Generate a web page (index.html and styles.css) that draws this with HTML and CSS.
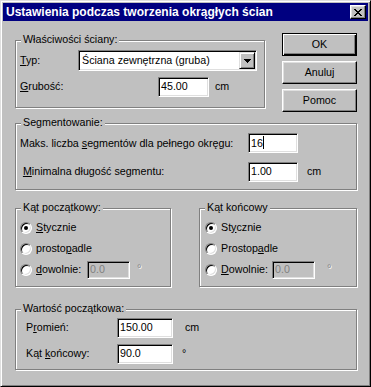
FILE: index.html
```html
<!DOCTYPE html>
<html lang="pl">
<head>
<meta charset="utf-8">
<title>Ustawienia podczas tworzenia okrągłych ścian</title>
<link rel="stylesheet" href="styles.css">
</head>
<body>
<div class="window">
  <div class="titlebar">
    <span class="title">Ustawienia podczas tworzenia okrągłych ścian</span>
    <span class="close"><svg width="8" height="7" viewBox="0 0 8 7" shape-rendering="crispEdges"><path d="M0 0h2v1H0zM6 0h2v1H6zM1 1h2v1H1zM5 1h2v1H5zM2 2h4v1H2zM3 3h2v1H3zM2 4h4v1H2zM1 5h2v1H1zM5 5h2v1H5zM0 6h2v1H0zM6 6h2v1H6z" fill="#000"/></svg></span>
  </div>
  <div class="body">
    <div class="top-row">
      <div class="group g-props">
        <span class="legend">Właściwości ściany:</span>
        <div class="row">
          <span class="lbl w-typ"><u>T</u>yp:</span>
          <div class="combo">
            <span class="combo-text">Ściana zewnętrzna (gruba)</span>
            <span class="drop"><svg width="7" height="4" viewBox="0 0 7 4" shape-rendering="crispEdges"><path d="M0 0h7v1H0zM1 1h5v1H1zM2 2h3v1H2zM3 3h1v1H3z" fill="#000"/></svg></span>
          </div>
        </div>
        <div class="row r-grub">
          <span class="lbl w-grub"><u>G</u>rubość:</span>
          <div class="edit w51">45.00</div>
          <span class="unit u6">cm</span>
        </div>
      </div>
      <div class="buttons">
        <div class="btn default">OK</div>
        <div class="btn">Anuluj</div>
        <div class="btn">Pomoc</div>
      </div>
    </div>

    <div class="group g-seg">
      <span class="legend">Segmentowanie:</span>
      <div class="row">
        <span class="lbl w-seg">Maks. liczba <u>s</u>egmentów dla pełnego okręgu:</span>
        <div class="edit w50">16<span class="caret"></span></div>
      </div>
      <div class="row r-min">
        <span class="lbl w-seg indent">&#8202;<u>M</u>inimalna długość segmentu:</span>
        <div class="edit w50">1.00</div>
        <span class="unit u9">cm</span>
      </div>
    </div>

    <div class="pair">
      <div class="group g-start">
        <span class="legend">Kąt początkowy:</span>
        <div class="opt"><span class="radio on"></span><span><u>S</u>tycznie</span></div>
        <div class="opt"><span class="radio"></span><span>prosto<u>p</u>adle</span></div>
        <div class="opt"><span class="radio"></span><span class="lbl w-dow"><u>d</u>owolnie:</span><div class="edit dis w43">0.0</div><span class="deg dg7">°</span></div>
      </div>
      <div class="group g-end">
        <span class="legend">Kąt końcowy</span>
        <div class="opt"><span class="radio on"></span><span>St<u>y</u>cznie</span></div>
        <div class="opt"><span class="radio"></span><span>Prostop<u>a</u>dle</span></div>
        <div class="opt"><span class="radio"></span><span class="lbl w-dow"><u>D</u>owolnie:</span><div class="edit dis w43">0.0</div><span class="deg dg12">°</span></div>
      </div>
    </div>

    <div class="group g-init">
      <span class="legend">Wartość początkowa:</span>
      <div class="row">
        <span class="lbl w-init">P<u>r</u>omień:</span>
        <div class="edit w56">150.00</div>
        <span class="unit u12">cm</span>
      </div>
      <div class="row r-kat">
        <span class="lbl w-init">Kąt <u>k</u>ońcowy:</span>
        <div class="edit w56">90.0</div>
        <span class="unit u9">°</span>
      </div>
    </div>
  </div>
</div>
</body>
</html>
```

FILE: styles.css
```css
html, body {
  margin: 0;
  padding: 0;
  background: #c0c0c0;
}
body {
  font-family: "Liberation Sans", Arial, sans-serif;
  font-size: 10.7px;
  line-height: 13px;
  color: #000;
}
u {
  text-decoration: underline;
  text-underline-offset: 1px;
}
.window {
  width: 371px;
  height: 387px;
  box-sizing: border-box;
  background: #c0c0c0;
  border: 1px solid;
  border-color: #dfdfdf #000 #000 #dfdfdf;
  box-shadow: inset 1px 1px #fff, inset -1px -1px #808080;
  padding: 2px;
}
.titlebar {
  height: 18px;
  background: #000080;
  display: flex;
  align-items: center;
  justify-content: space-between;
  padding-left: 3px;
}
.title {
  color: #fff;
  font-weight: bold;
  font-size: 12px;
  white-space: nowrap;
}
.close {
  width: 16px;
  height: 14px;
  box-sizing: border-box;
  margin-right: 2px;
  background: #c0c0c0;
  border: 1px solid;
  border-color: #fff #000 #000 #fff;
  box-shadow: inset -1px -1px #808080, inset 1px 1px #dfdfdf;
  display: flex;
  align-items: center;
  justify-content: center;
}
.close svg { display: block; }

.body {
  padding: 12px 11px 0 12px;
}
.top-row {
  display: flex;
  justify-content: space-between;
  align-items: flex-start;
}
.group {
  position: relative;
  box-sizing: border-box;
  border: 1px solid #808080;
  box-shadow: inset 1px 1px #fff, 1px 1px #fff;
}
.legend {
  position: absolute;
  top: -8px;
  left: 5px;
  padding: 0 2px;
  background: #c0c0c0;
  white-space: nowrap;
}
.row {
  display: flex;
  align-items: baseline;
  white-space: nowrap;
}
.lbl {
  box-sizing: border-box;
  white-space: nowrap;
}
.unit { white-space: nowrap; }
.u6 { margin-left: 6px; }
.u9 { margin-left: 9px; }
.u12 { margin-left: 12px; }

/* group 1 */
.g-props {
  width: 250px;
  height: 68px;
  margin-top: 7px;
  padding: 9px 0 0 4px;
}
.w-typ { width: 58px; }
.w-grub { width: 138px; }
.r-grub { margin-top: 6px; }

.combo {
  width: 179px;
  height: 21px;
  box-sizing: border-box;
  background: #fff;
  border: 1px solid;
  border-color: #808080 #fff #fff #808080;
  box-shadow: inset 1px 1px #000, inset -1px -1px #dfdfdf;
  display: flex;
  align-items: flex-start;
}
.combo-text {
  padding: 3px 0 0 3px;
  white-space: nowrap;
}
.drop {
  margin: 1px 1px 1px auto;
  width: 16px;
  height: 17px;
  box-sizing: border-box;
  background: #c0c0c0;
  border: 1px solid;
  border-color: #dfdfdf #000 #000 #dfdfdf;
  box-shadow: inset 1px 1px #fff, inset -1px -1px #808080;
  display: flex;
  align-items: center;
  justify-content: center;
}
.drop svg { display: block; }

.edit {
  height: 20px;
  box-sizing: border-box;
  background: #fff;
  border: 1px solid;
  border-color: #808080 #fff #fff #808080;
  box-shadow: inset 1px 1px #000, inset -1px -1px #dfdfdf;
  padding: 2px 2px 0 2px;
  white-space: nowrap;
}
.edit.dis {
  background: #c0c0c0;
  color: #808080;
  height: 18px;
  padding-top: 1px;
}
.w43 { width: 43px; }
.w50 { width: 50px; }
.w51 { width: 51px; }
.w56 { width: 56px; }
.caret {
  display: inline-block;
  width: 1px;
  height: 13px;
  background: #000;
  vertical-align: -2px;
}

/* buttons */
.buttons {
  display: flex;
  flex-direction: column;
  gap: 5px;
}
.btn {
  width: 75px;
  height: 23px;
  box-sizing: border-box;
  background: #c0c0c0;
  border: 1px solid;
  border-color: #fff #000 #000 #fff;
  box-shadow: inset -1px -1px #808080, inset 1px 1px #dfdfdf;
  display: flex;
  align-items: center;
  justify-content: center;
}
.btn.default {
  border-color: #000;
  box-shadow: inset 1px 1px #fff, inset -1px -1px #000, inset -2px -2px #808080;
}

/* segmentowanie */
.g-seg {
  margin-top: 11px;
  height: 67px;
  padding: 9px 0 0 4px;
}
.w-seg { width: 228px; }
.indent { padding-left: 2px; }
.r-min { margin-top: 9px; }

/* angle groups */
.pair {
  display: flex;
  justify-content: space-between;
  margin-top: 18px;
}
.g-start {
  width: 156px;
  height: 79px;
  padding: 8px 0 0 4px;
}
.g-end {
  width: 158px;
  height: 79px;
  padding: 8px 0 0 5px;
}
.opt {
  display: flex;
  align-items: center;
  height: 21px;
  white-space: nowrap;
}
.radio {
  position: relative;
  width: 12px;
  height: 12px;
  box-sizing: border-box;
  border-radius: 50%;
  border: 1px solid;
  border-color: #808080 #fff #fff #808080;
  box-shadow: inset 1px 1px #000, inset -1px -1px #dfdfdf;
  background: #fff;
  margin-right: 4px;
  flex: none;
}
.radio.on::after {
  content: "";
  position: absolute;
  left: 3px;
  top: 3px;
  width: 4px;
  height: 4px;
  border-radius: 50%;
  background: #000;
}
.w-dow { width: 51px; }
.deg {
  color: #808080;
  text-shadow: 1px 1px #fff;
  align-self: flex-start;
  margin-top: 3px;
}
.dg7 { margin-left: 7px; }
.dg12 { margin-left: 12px; }

/* initial values */
.g-init {
  margin-top: 22px;
  height: 61px;
  padding: 8px 0 0 10px;
}
.w-init { width: 91px; }
.r-kat { margin-top: 6px; }
```
